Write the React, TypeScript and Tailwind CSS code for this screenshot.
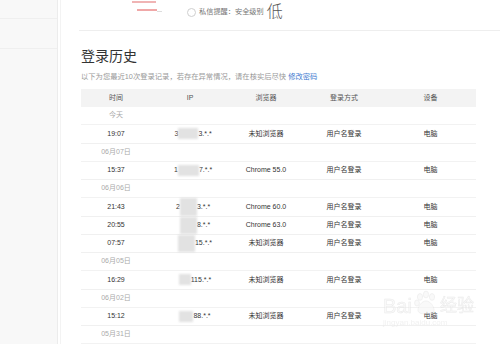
import React from "react";

type Row =
	| { kind: "label"; text: string }
	| {
			kind: "data";
			time: string;
			pre: string;
			blur: number;
			tall?: boolean;
			post: string;
			browser: string;
	  };

const rows: Row[] = [
	{ kind: "label", text: "今天" },
	{ kind: "data", time: "19:07", pre: "3", blur: 20, post: "3.*.*", browser: "未知浏览器" },
	{ kind: "label", text: "06月07日" },
	{ kind: "data", time: "15:37", pre: "1", blur: 21, post: "7.*.*", browser: "Chrome 55.0" },
	{ kind: "label", text: "06月06日" },
	{ kind: "data", time: "21:43", pre: "2", blur: 17, tall: true, post: "3.*.*", browser: "Chrome 60.0" },
	{ kind: "data", time: "20:55", pre: "", blur: 17, tall: true, post: "8.*.*", browser: "Chrome 63.0" },
	{ kind: "data", time: "07:57", pre: "", blur: 17, tall: true, post: "15.*.*", browser: "未知浏览器" },
	{ kind: "label", text: "06月05日" },
	{ kind: "data", time: "16:29", pre: "", blur: 12, post: "115.*.*", browser: "未知浏览器" },
	{ kind: "label", text: "06月02日" },
	{ kind: "data", time: "15:12", pre: "", blur: 14, post: "88.*.*", browser: "未知浏览器" },
	{ kind: "label", text: "05月31日" },
];

const cols = "grid grid-cols-[70px_78px_74px_82px_91px] items-center";

export default function App() {
	return (
		<div
			className="flex w-[500px] h-[344px] overflow-hidden bg-white text-[#333]"
			style={{ fontFamily: '"Liberation Sans", "Noto Sans CJK SC", sans-serif' }}
		>
			{/* Sidebar */}
			<div className="w-[58px] shrink-0 bg-[#f8f8f8] border-r border-[#ececec]">
				<div className="h-[19px] border-b border-[#efefef]" />
				<div className="h-[30px] border-b border-[#efefef]" />
			</div>
			<div className="w-[3px] shrink-0 border-r border-[#f3f3f3]" />

			{/* Main */}
			<div className="relative flex-1 min-w-0">
				{/* Top bar */}
				<div className="ml-[18px] h-[31px] border-b border-[#eeeeee] relative">
					<div className="absolute left-[53px] top-[1px] w-[24px] h-[2px] bg-[#f0b4b4]" />
					<div className="absolute left-[58px] top-[9px] w-[20px] h-[2px] bg-[#f0a8a8]" />
					<div className="absolute left-[78px] top-[11px] w-[5px] h-[1px] bg-[#dddddd]" />
					<div className="absolute left-[108px] top-[3px] flex items-center h-[18px]">
						<span className="w-[9px] h-[9px] rounded-full border border-[#cfcfcf]" />
						<span className="ml-[3px] text-[7.2px] text-[#777]">私信提醒：安全级别</span>
						<span className="ml-[3px] text-[16px] leading-[18px] text-[#555] font-light">低</span>
					</div>
				</div>

				<div className="pl-[20px] pr-[24px]">
					<h1 className="mt-[17px] h-[16px] text-[14px] leading-[16px] text-[#333] font-normal">
						登录历史
					</h1>
					<p className="mt-[8px] h-[10px] text-[7.3px] leading-[10px] text-[#9a9a9a]">
						以下为您最近10次登录记录，若存在异常情况，请在核实后尽快{" "}
						<span className="text-[#3d7ad0]">修改密码</span>
					</p>

					<div className="mt-[7px] w-[395px]">
						<div className={`${cols} h-[18px] bg-[#f3f3f3] text-[7px] text-[#555] text-center`}>
							<span>时间</span>
							<span>IP</span>
							<span>浏览器</span>
							<span>登录方式</span>
							<span>设备</span>
						</div>
						{rows.map((r, i) =>
							r.kind === "label" ? (
								<div
									key={i}
									className="h-[18.25px] border-b border-[#f2f2f2] flex items-center text-[7px] text-[#aaa]"
								>
									<span className="w-[70px] text-center">{r.text}</span>
								</div>
							) : (
								<div
									key={i}
									className={`${cols} h-[18.25px] border-b border-[#f0f0f0] text-[7px] text-[#333] text-center`}
								>
									<span>{r.time}</span>
									<span className="flex items-center justify-center h-full pl-[4px]">
										<span className="w-[6px] text-right">{r.pre}</span>
										<span
											className={`bg-[#e2e2e2] blur-[1px] ${r.tall ? "h-full" : "h-[11px]"}`}
											style={{ width: r.blur }}
										/>
										<span>{r.post}</span>
									</span>
									<span>{r.browser}</span>
									<span>用户名登录</span>
									<span>电脑</span>
								</div>
							)
						)}
					</div>
				</div>

				{/* Watermark */}
				<div className="absolute left-[322px] top-[290px] flex flex-col items-start pointer-events-none select-none opacity-60">
					<div className="flex items-end text-[#f6f6f6] [-webkit-text-stroke:0.5px_#dcdcdc]">
						<span className="text-[20px] leading-[20px]">Bai</span>
						<svg width="26" height="26" viewBox="0 0 26 26" className="mx-[1px]">
							<g fill="#f6f6f6" stroke="#dcdcdc" strokeWidth="0.6">
								<ellipse cx="7" cy="7" rx="2.6" ry="3.4" />
								<ellipse cx="13" cy="4.5" rx="2.6" ry="3.4" />
								<ellipse cx="19" cy="7" rx="2.6" ry="3.4" />
								<ellipse cx="4" cy="13" rx="2.4" ry="3" />
								<path d="M13 11c-4 0-8 5-8 9 0 3 3 4 8 4s8-1 8-4c0-4-4-9-8-9z" />
							</g>
						</svg>
						<span className="text-[17px] leading-[20px]">经验</span>
					</div>
					<span className="text-[8px] leading-[10px] text-[#e8e8e8] mt-[2px]">jingyan.baidu.com</span>
				</div>
			</div>
		</div>
	);
}
